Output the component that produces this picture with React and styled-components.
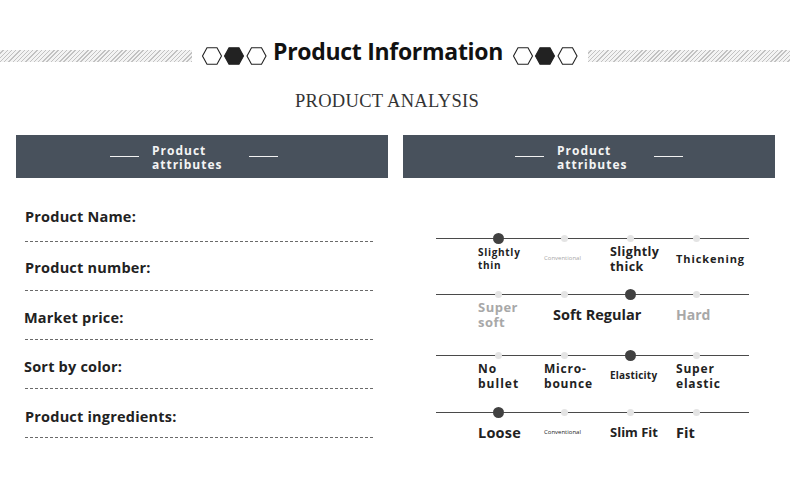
import React from 'react';
import styled, { createGlobalStyle } from 'styled-components';

const Global = createGlobalStyle`
  html, body { margin: 0; padding: 0; background: #fff; }
  body {
    font-family: "Open Sans", "Noto Sans", sans-serif;
    width: 790px; height: 489px; overflow: hidden;
  }
`;

const Page = styled.div`
  width: 790px;
  height: 489px;
  box-sizing: border-box;
  padding-top: 41px;
  overflow: hidden;
`;

const TitleRow = styled.div`
  display: flex;
  align-items: center;
  height: 30px;
`;

const Stripes = styled.div`
  flex: ${p => (p.$w ? `0 0 ${p.$w}px` : '1 1 auto')};
  height: 12px;
  margin: ${p => p.$m};
  background: repeating-linear-gradient(135deg, #f3f3f3 0 2px, #c2c2c2 2px 3px);
`;

const Title = styled.h1`
  margin: 0 10px 10px 6px;
  width: 230px;
  text-align: center;
  white-space: nowrap;
  font-size: 23px;
  letter-spacing: -0.3px;
  line-height: 30px;
  font-weight: 700;
  color: #111;
`;

const HexSvg = styled.svg`
  flex: 0 0 auto;
  display: block;
`;

const hex = cx =>
  `${cx - 9.5},9 ${cx - 5},0.8 ${cx + 5},0.8 ${cx + 9.5},9 ${cx + 5},17.2 ${cx - 5},17.2`;

const Hexes = () => (
  <HexSvg width="65" height="18" viewBox="0 0 65 18">
    <polygon points={hex(10)} fill="#fff" stroke="#222" strokeWidth="1.1" />
    <polygon points={hex(32)} fill="#222" stroke="#222" strokeWidth="1.1" />
    <polygon points={hex(54.5)} fill="#fff" stroke="#222" strokeWidth="1.1" />
  </HexSvg>
);

const Subtitle = styled.h2`
  margin: 19px 0 0;
  padding-right: 16px;
  text-align: center;
  font-family: "Liberation Serif", "DejaVu Serif", serif;
  font-weight: 400;
  font-size: 18.5px;
  letter-spacing: 0.3px;
  line-height: 22px;
  color: #333;
`;

const Columns = styled.div`
  display: grid;
  grid-template-columns: 372px 372px;
  column-gap: 15px;
  padding-left: 16px;
  margin-top: 23px;
`;

const HeaderBar = styled.div`
  height: 43px;
  background: #48515c;
  display: flex;
  align-items: center;
  padding-left: ${p => p.$offset}px;
`;

const HeaderDash = styled.span`
  width: 29px;
  height: 1px;
  background: #f2f2f2;
`;

const HeaderText = styled.div`
  margin: 3px 0 0 13px;
  width: 97px;
  font-size: 12px;
  line-height: 14.5px;
  font-weight: 700;
  letter-spacing: 1px;
  color: #f4f4f4;
`;

const Header = ({ offset }) => (
  <HeaderBar $offset={offset}>
    <HeaderDash />
    <HeaderText>
      Product
      <br />
      attributes
    </HeaderText>
    <HeaderDash />
  </HeaderBar>
);

const FieldList = styled.div`
  padding: 16px 0 0 9px;
`;

const Field = styled.div`
  height: 49px;
  display: flex;
  flex-direction: column;
`;

const FieldLabel = styled.div`
  margin-top: ${p => p.$top}px;
  margin-left: ${p => p.$shift || 0}px;
  font-size: 14.5px;
  line-height: 20px;
  font-weight: 700;
  color: #222;
  letter-spacing: 0.2px;
`;

const Rule = styled.div`
  margin-top: auto;
  margin-bottom: 1px;
  width: 350px;
  height: 1px;
  background: repeating-linear-gradient(90deg, #6a6a6a 0 3px, transparent 3px 5px);
`;

const ScaleArea = styled.div`
  padding-left: 33px;
  width: 313px;
`;

const ScaleBlock = styled.div`
  margin-top: ${p => p.$mt}px;
`;

const Track = styled.div`
  position: relative;
  display: grid;
  grid-template-columns: repeat(4, 66px);
  padding-left: 42px;
  height: 11px;
  align-items: center;
  &::before {
    content: '';
    position: absolute;
    left: 0;
    right: 0;
    top: 5px;
    height: 1px;
    background: #4a4a4a;
  }
`;

const Dot = styled.span`
  position: relative;
  justify-self: start;
  width: ${p => (p.$on ? 11 : 7)}px;
  height: ${p => (p.$on ? 11 : 7)}px;
  margin-left: ${p => (p.$on ? 14.5 : 16.5)}px;
  border-radius: 50%;
  background: ${p => (p.$on ? '#414141' : '#e4e4e4')};
`;

const Labels = styled.div`
  display: grid;
  grid-template-columns: repeat(4, 66px);
  padding-left: 42px;
  min-height: 30px;
  align-items: center;
`;

const Opt = styled.div`
  grid-column: ${p => p.$col || 'auto'};
  padding-left: ${p => p.$pl || 0}px;
  font-size: ${p => p.$size}px;
  line-height: ${p => (p.$size < 12 ? 13 : 15)}px;
  letter-spacing: ${p => p.$ls || 0}px;
  font-weight: ${p => (p.$thin ? 400 : 700)};
  color: ${p => (p.$muted ? '#a8a8a8' : '#222')};
  white-space: nowrap;
`;

const scales = [
  {
    mt: 54.5,
    on: 0,
    opts: [
      { t: ['Slightly', 'thin'], size: 10, ls: 0.7 },
      { t: ['Conventional'], size: 6, thin: true, muted: true },
      { t: ['Slightly', 'thick'], size: 12.5, ls: 0.4 },
      { t: ['Thickening'], size: 11, ls: 0.9 },
    ],
  },
  {
    mt: 15,
    on: 2,
    opts: [
      { t: ['Super', 'soft'], size: 13, ls: 0.5, muted: true },
      { t: ['Soft Regular'], size: 14.5, col: '2 / span 2', pl: 9 },
      { t: ['Hard'], size: 14, muted: true },
    ],
  },
  {
    mt: 20,
    on: 2,
    opts: [
      { t: ['No', 'bullet'], size: 12, ls: 1 },
      { t: ['Micro-', 'bounce'], size: 12, ls: 0.8 },
      { t: ['Elasticity'], size: 10, ls: 0.2 },
      { t: ['Super', 'elastic'], size: 12, ls: 0.8 },
    ],
  },
  {
    mt: 16,
    on: 0,
    opts: [
      { t: ['Loose'], size: 14.5, ls: 0.2 },
      { t: ['Conventional'], size: 6, thin: true },
      { t: ['Slim Fit'], size: 13 },
      { t: ['Fit'], size: 14.5 },
    ],
  },
];

const fields = [
  { label: 'Product Name:', top: 13 },
  { label: 'Product number:', top: 15 },
  { label: 'Market price:', top: 16, shift: -1 },
  { label: 'Sort by color:', top: 16, shift: -1 },
  { label: 'Product ingredients:', top: 17 },
];

export default function App() {
  return (
    <Page>
      <Global />
      <TitleRow>
        <Stripes $w={192} $m="0 10px 0 0" />
        <Hexes />
        <Title>Product Information</Title>
        <Hexes />
        <Stripes $m="0 0 0 10px" />
      </TitleRow>
      <Subtitle>PRODUCT ANALYSIS</Subtitle>
      <Columns>
        <div>
          <Header offset={94} />
          <FieldList>
            {fields.map(f => (
              <Field key={f.label}>
                <FieldLabel $top={f.top} $shift={f.shift}>
                  {f.label}
                </FieldLabel>
                <Rule />
              </Field>
            ))}
          </FieldList>
        </div>
        <div>
          <Header offset={112} />
          <ScaleArea>
            {scales.map((s, i) => (
              <ScaleBlock key={i} $mt={s.mt}>
                <Track>
                  {[0, 1, 2, 3].map(k => (
                    <Dot key={k} $on={k === s.on} />
                  ))}
                </Track>
                <Labels>
                  {s.opts.map((o, j) => (
                    <Opt
                      key={j}
                      $size={o.size}
                      $ls={o.ls}
                      $thin={o.thin}
                      $muted={o.muted}
                      $col={o.col}
                      $pl={o.pl}
                    >
                      {o.t.map((line, n) => (
                        <React.Fragment key={n}>
                          {n > 0 && <br />}
                          {line}
                        </React.Fragment>
                      ))}
                    </Opt>
                  ))}
                </Labels>
              </ScaleBlock>
            ))}
          </ScaleArea>
        </div>
      </Columns>
    </Page>
  );
}
